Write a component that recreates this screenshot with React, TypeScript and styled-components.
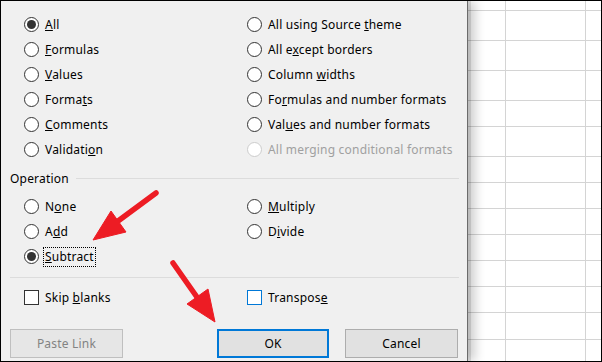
import React from 'react';
import styled, { createGlobalStyle } from 'styled-components';

const GlobalStyle = createGlobalStyle`
  html, body {
    margin: 0;
    padding: 0;
    background: #ffffff;
  }
  body {
    font-family: "Segoe UI", "Noto Sans", "Open Sans", sans-serif;
  }
`;

const Frame = styled.div`
  position: relative;
  display: flex;
  width: 602px;
  height: 362px;
  box-sizing: border-box;
  border: 1px solid #000;
  overflow: hidden;
  background: #fff;
`;

const Dialog = styled.div`
  position: relative;
  z-index: 1;
  width: 467px;
  flex: none;
  box-sizing: border-box;
  display: flex;
  flex-direction: column;
  background: #f0f0f0;
  border-right: 1px solid #6b6b6b;
  box-shadow: 3px 0 0 rgba(0, 0, 0, 0.1), 7px 0 10px rgba(0, 0, 0, 0.2);
  color: #000;
  font-size: 12px;
  letter-spacing: 0.2px;
`;

const OptionGrid = styled.div<{ $rows: number; $top: number }>`
  display: grid;
  grid-auto-flow: column;
  grid-template-columns: 223px 1fr;
  grid-template-rows: repeat(${(p) => p.$rows}, 25px);
  padding-left: 23px;
  margin-top: ${(p) => p.$top}px;
`;

const Option = styled.div<{ $disabled?: boolean }>`
  display: flex;
  align-items: center;
  gap: 4px;
  color: ${(p) => (p.$disabled ? '#a0a0a0' : '#000')};
  white-space: nowrap;
`;

const Radio = styled.span<{ $checked?: boolean; $disabled?: boolean }>`
  position: relative;
  width: 15px;
  height: 15px;
  flex: none;
  box-sizing: border-box;
  border-radius: 50%;
  border: 1px solid ${(p) => (p.$disabled ? '#cccccc' : '#333')};
  background: #fff;

  &::after {
    content: '';
    display: ${(p) => (p.$checked ? 'block' : 'none')};
    position: absolute;
    left: 2px;
    top: 2px;
    width: 9px;
    height: 9px;
    border-radius: 50%;
    background: #333;
  }
`;

const Check = styled.span<{ $hot?: boolean }>`
  width: 15px;
  height: 15px;
  flex: none;
  box-sizing: border-box;
  border: 1px solid ${(p) => (p.$hot ? '#0078d7' : '#333')};
  background: #fff;
`;

const Label = styled.span<{ $focus?: boolean }>`
  line-height: 18px;
  padding: 0 1px;
  border: 1px ${(p) => (p.$focus ? 'dotted #000' : 'solid transparent')};
`;

const GroupHeader = styled.div`
  display: flex;
  align-items: center;
  height: 16px;
  margin-top: 8px;
  padding: 0 8px 0 9px;

  &::after {
    content: '';
    flex: 1;
    height: 1px;
    margin-left: 7px;
    background: #dcdcdc;
  }
`;

const Separator = styled.div`
  height: 1px;
  margin: 8px 8px 0 9px;
  background: #dcdcdc;
`;

const ButtonRow = styled.div`
  display: flex;
  align-items: center;
  gap: 16px;
  padding: 0 9px;
  margin-top: 19px;
`;

const Button = styled.div<{ $variant?: 'default' | 'primary' | 'disabled'; $push?: boolean }>`
  width: ${(p) => (p.$variant === 'primary' ? 112 : 113)}px;
  height: 29px;
  box-sizing: border-box;
  display: flex;
  align-items: center;
  justify-content: center;
  margin-left: ${(p) => (p.$push ? 'auto' : '0')};
  background: ${(p) => (p.$variant === 'disabled' ? '#e6e6e6' : '#e1e1e1')};
  border: ${(p) =>
    p.$variant === 'primary'
      ? '2px solid #0078d7'
      : p.$variant === 'disabled'
      ? '1px solid #bfbfbf'
      : '1px solid #adadad'};
  color: ${(p) => (p.$variant === 'disabled' ? '#838383' : '#000')};
`;

const Sheet = styled.div`
  flex: 1;
  display: flex;
  flex-direction: column;
  background: #fff;
`;

const SheetRow = styled.div<{ $h: number }>`
  display: flex;
  height: ${(p) => p.$h}px;
  flex: none;
  border-bottom: 1px solid #d4d4d4;

  &:last-child {
    flex: 1;
    border-bottom: none;
  }
`;

const Cell = styled.div<{ $w?: number }>`
  width: ${(p) => (p.$w ? `${p.$w}px` : 'auto')};
  flex: ${(p) => (p.$w ? 'none' : '1')};
  border-right: ${(p) => (p.$w ? '1px solid #d4d4d4' : 'none')};
`;

const Arrows = styled.svg`
  position: absolute;
  left: -1px;
  top: -1px;
  z-index: 2;
  pointer-events: none;
`;

type Opt = { label: string; key?: number; checked?: boolean; disabled?: boolean; focus?: boolean };

// underline the access key letter
const Keyed = ({ label, at }: { label: string; at?: number }) =>
  at === undefined ? (
    <>{label}</>
  ) : (
    <>
      {label.slice(0, at)}
      <u>{label[at]}</u>
      {label.slice(at + 1)}
    </>
  );

const pasteOptions: Opt[] = [
  { label: 'All', key: 0, checked: true },
  { label: 'Formulas', key: 0 },
  { label: 'Values', key: 0 },
  { label: 'Formats', key: 5 },
  { label: 'Comments', key: 0 },
  { label: 'Validation', key: 8 },
  { label: 'All using Source theme', key: 17 },
  { label: 'All except borders', key: 5 },
  { label: 'Column widths', key: 7 },
  { label: 'Formulas and number formats', key: 2 },
  { label: 'Values and number formats', key: 3 },
  { label: 'All merging conditional formats', disabled: true },
];

const operations: Opt[] = [
  { label: 'None', key: 1 },
  { label: 'Add', key: 1 },
  { label: 'Subtract', key: 0, checked: true, focus: true },
  { label: 'Multiply', key: 0 },
  { label: 'Divide', key: 1 },
];

const sheetRows = [9, 29, 29, 29, 25, 29, 25, 25, 25, 25, 25, 25, 26, 20];

const RadioOption = ({ o }: { o: Opt }) => (
  <Option $disabled={o.disabled}>
    <Radio $checked={o.checked} $disabled={o.disabled} />
    <Label $focus={o.focus}>
      <Keyed label={o.label} at={o.key} />
    </Label>
  </Option>
);

const App: React.FC = () => {
  return (
    <>
      <GlobalStyle />
      <Frame>
        <Dialog>
          <OptionGrid $rows={6} $top={11}>
            {pasteOptions.map((o) => (
              <RadioOption key={o.label} o={o} />
            ))}
          </OptionGrid>

          <GroupHeader>Operation</GroupHeader>
          <OptionGrid $rows={3} $top={8}>
            {operations.map((o) => (
              <RadioOption key={o.label} o={o} />
            ))}
          </OptionGrid>

          <Separator />

          <OptionGrid $rows={1} $top={7}>
            <Option>
              <Check />
              <Label>
                <Keyed label="Skip blanks" at={5} />
              </Label>
            </Option>
            <Option>
              <Check $hot />
              <Label>
                <Keyed label="Transpose" at={8} />
              </Label>
            </Option>
          </OptionGrid>

          <ButtonRow>
            <Button $variant="disabled">Paste Link</Button>
            <Button $variant="primary" $push>
              OK
            </Button>
            <Button>Cancel</Button>
          </ButtonRow>
        </Dialog>

        <Sheet>
          {sheetRows.map((h, i) => (
            <SheetRow key={i} $h={h}>
              <Cell $w={37} />
              <Cell $w={79} />
              <Cell />
            </SheetRow>
          ))}
        </Sheet>

        {/* red callout arrows */}
        <Arrows width="602" height="362" viewBox="0 0 602 362">
          <g fill="#ed1c24" stroke="#ed1c24">
            <line x1="156" y1="193" x2="114" y2="224" strokeWidth="5.5" strokeLinecap="round" />
            <polygon points="111,211 126,232 93,240" strokeWidth="1" strokeLinejoin="round" />
            <line x1="173" y1="263" x2="199" y2="300" strokeWidth="5.5" strokeLinecap="round" />
            <polygon points="208,289 187,304 215,322" strokeWidth="1" strokeLinejoin="round" />
          </g>
        </Arrows>
      </Frame>
    </>
  );
};

export default App;
